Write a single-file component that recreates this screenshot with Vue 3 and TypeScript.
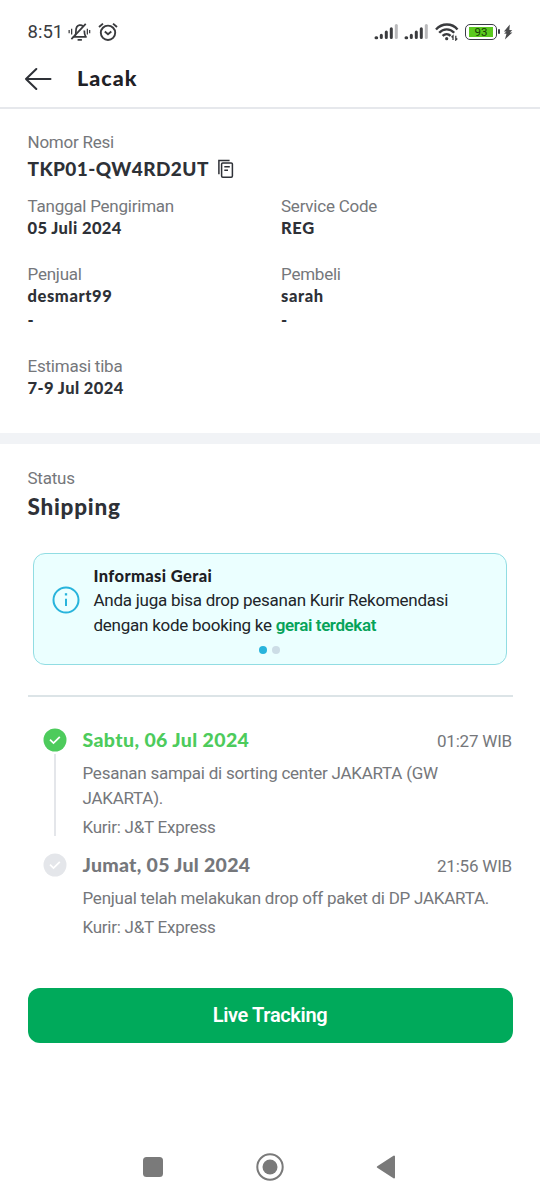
<script setup lang="ts">
interface Party { label: string; name: string; address: string }
interface TrackingEvent {
  date: string
  time: string
  message: string
  courier: string
  active: boolean
}

const parties: Party[] = [
  { label: 'Penjual', name: 'desmart99', address: '-' },
  { label: 'Pembeli', name: 'sarah', address: '-' },
]

const events: TrackingEvent[] = [
  {
    date: 'Sabtu, 06 Jul 2024',
    time: '01:27 WIB',
    message: 'Pesanan sampai di sorting center JAKARTA (GW JAKARTA).',
    courier: 'Kurir: J&T Express',
    active: true,
  },
  {
    date: 'Jumat, 05 Jul 2024',
    time: '21:56 WIB',
    message: 'Penjual telah melakukan drop off paket di DP JAKARTA.',
    courier: 'Kurir: J&T Express',
    active: false,
  },
]
</script>

<template>
  <div class="screen">
    <div class="statusbar">
      <span class="clock">8:51</span>
      <svg class="bell" width="23" height="20" viewBox="0 0 24 20" fill="none" stroke="#3a3b3e" stroke-width="1.8">
        <path d="M5 15.200h14.500M7.300 14.500c1-1.500 1-3 1-5.500C8.300 5.500 9.800 3.300 12 2.900c1.500-.2 2.800.2 3.700 1.200M17 8.500c0 3 .2 4.500 1.500 6.500" />
        <path d="M10 18.200h4.500" stroke-width="1.800" />
        <path d="M3.500 17.500 18.500 1.500" />
        <path d="M3.800 6.500v6M1.200 7.800v3.500M20.200 6.500v6M22.600 7.800v3.500" stroke-width="1.300" />
      </svg>
      <svg class="alarm" width="20" height="20" viewBox="0 0 20 20" fill="none" stroke="#3a3b3e" stroke-width="1.900">
        <circle cx="10" cy="10.800" r="7.200" />
        <path d="M6.800 9.600 10 12.300l3.300-2.700M1 5 5 1.600M19 5l-4-3.400" />
      </svg>
      <span class="spacer"></span>
      <svg v-for="n in 2" :key="n" class="signal" width="25" height="17" viewBox="0 0 25 17" stroke-width="3" stroke-linecap="round" stroke="#3a3b3e">
        <path d="M2 14.700h.7M7.300 14.500v-2.300M12.300 14.500V9M17.300 14.500V5.700" />
        <path d="M22.300 14.500V2.500" stroke="#b9b9bb" />
      </svg>
      <svg class="wifi" width="24" height="18" viewBox="0 0 24 18" fill="none" stroke="#3a3b3e" stroke-width="2.400">
        <path d="M1 6.500C7-.1 17-.1 22.500 6.500M4.200 9.800c4.200-4.600 10.800-4.600 15 0M7.600 12.900c2.400-2.400 5.600-2.400 8 0" />
        <circle cx="11.700" cy="15.700" r="1.600" fill="#3a3b3e" stroke="none" />
        <path d="M18 17v-4.300l-1.500 1.500M20.800 12.700V17l1.500-1.500" stroke-width="1.300" />
      </svg>
      <div class="battery"><span class="charge">93</span></div>
      <svg class="bolt" width="10" height="16" viewBox="0 0 10 16" fill="#4a4b4d">
        <path d="M6.800.5.900 7.600h2.600L1 9.600l2.500.2-1.600 5.700L9.400 8.400H6.800l2.500-2.200-2.900-.2z" />
      </svg>
    </div>

    <header class="header">
      <svg width="28" height="24" viewBox="0 0 28 24" fill="none" stroke="#2e3137" stroke-width="2" stroke-linecap="round" stroke-linejoin="round">
        <path d="M26.500 13H2M12.300 3 2 13l10.300 10" />
      </svg>
      <h1>Lacak</h1>
    </header>

    <section class="details">
      <div class="label">Nomor Resi</div>
      <div class="receipt">
        <strong>TKP01-QW4RD2UT</strong>
        <svg width="18" height="20" viewBox="0 0 18 20" fill="none" stroke="#2e3137" stroke-width="1.500">
          <rect x="4.600" y="3.900" width="10.800" height="14.400" rx="1.200" />
          <path d="M1.900 15.300V1.400h10.700M7.300 7.700h5.500M7.300 11.200h3.700" />
        </svg>
      </div>
      <div class="grid">
        <div>
          <div class="label">Tanggal Pengiriman</div>
          <div class="value v-date">05 Juli 2024</div>
        </div>
        <div>
          <div class="label">Service Code</div>
          <div class="value">REG</div>
        </div>
      </div>
      <div class="grid parties">
        <div v-for="party in parties" :key="party.label">
          <div class="label">{{ party.label }}</div>
          <div class="value">{{ party.name }}</div>
          <div class="value address">{{ party.address }}</div>
        </div>
      </div>
      <div class="eta">
        <div class="label">Estimasi tiba</div>
        <div class="value v-date">7-9 Jul 2024</div>
      </div>
    </section>

    <section class="status">
      <div class="label">Status</div>
      <h2>Shipping</h2>

      <div class="notice">
        <svg class="info" width="28" height="28" viewBox="0 0 28 28" fill="none" stroke="#28b4dc" stroke-width="2">
          <circle cx="14" cy="14" r="12.500" />
          <path d="M14 12.700V20" />
          <path d="M14 7.200v2.300" stroke-width="2.300" />
        </svg>
        <div class="notice-body">
          <div class="notice-title">Informasi Gerai</div>
          <p>Anda juga bisa drop pesanan Kurir Rekomendasi</p>
          <p><span>dengan kode booking ke </span><b>gerai terdekat</b></p>
        </div>
        <div class="dots"><i class="on"></i><i></i></div>
      </div>

      <ol class="timeline">
        <li v-for="event in events" :key="event.date" :class="{ active: event.active }">
          <div class="rail">
            <svg width="24" height="24" viewBox="0 0 24 24">
              <circle class="disc" cx="12" cy="12" r="11.500" />
              <path d="m7 11.700 3.500 3.400 6.300-6.200" fill="none" stroke="#fff" stroke-width="1.800" />
            </svg>
            <span v-if="event.active" class="line"></span>
          </div>
          <div class="event">
            <div class="event-head">
              <span class="date">{{ event.date }}</span>
              <time>{{ event.time }}</time>
            </div>
            <p class="message">{{ event.message }}</p>
            <div class="courier">{{ event.courier }}</div>
          </div>
        </li>
      </ol>

      <button type="button" class="live">Live Tracking</button>
    </section>

    <nav class="navbar">
      <svg width="20" height="20" viewBox="0 0 20 20"><rect width="20" height="20" rx="3.500" fill="#7a7a7a" /></svg>
      <svg width="28" height="28" viewBox="0 0 28 28">
        <circle cx="14" cy="14" r="12.700" fill="none" stroke="#7a7a7a" stroke-width="2" />
        <circle cx="14" cy="14" r="7.500" fill="#7a7a7a" />
      </svg>
      <svg width="20" height="24" viewBox="0 0 20 24">
        <path d="M1.800 12 18 1.600v20.800z" fill="#7a7a7a" stroke="#7a7a7a" stroke-width="2" stroke-linejoin="round" />
      </svg>
    </nav>
  </div>
</template>

<style>
body {
  margin: 0;
  background: #fff;
}
</style>

<style scoped>
.screen {
  box-sizing: border-box;
  width: 540px;
  height: 1200px;
  display: flex;
  flex-direction: column;
  overflow: hidden;
  background: #fff;
  color: #2e3137;
  font-family: Roboto, sans-serif;
}
svg { display: block; flex: none; }
h1, h2, p, ol { margin: 0; padding: 0; }

.statusbar {
  box-sizing: border-box;
  height: 49px;
  padding: 14px 27px 0 27.500px;
  display: flex;
  align-items: center;
}
.clock { font-size: 18.500px; color: #3a3b3e; }
.bell { margin-left: 5px; }
.alarm { margin-left: 7px; }
.spacer { flex: 1; }
.signal { margin-right: 5px; }
.wifi { margin-left: 1px; }
.battery {
  box-sizing: border-box;
  position: relative;
  width: 32px;
  height: 16px;
  margin-left: 6px;
  padding: 2px 3px;
  border: 1.500px solid #3a3b46;
  border-radius: 5px;
}
.battery::after {
  content: '';
  position: absolute;
  right: -4px;
  top: 4px;
  width: 2px;
  height: 5px;
  border-radius: 1px;
  background: #3a3b46;
}
.charge {
  display: block;
  height: 10px;
  background: #5bc91f;
  color: #173b08;
  font-size: 11.500px;
  line-height: 11px;
  text-align: center;
}
.bolt { margin-left: 6px; }

.header {
  box-sizing: border-box;
  height: 60px;
  padding-left: 24px;
  display: flex;
  align-items: center;
  border-bottom: 2px solid #e6e8ec;
}
h1 {
  margin-left: 25px;
  font: 900 21.500px/28px Lato, sans-serif;
  letter-spacing: 1px;
  color: #1f2126;
}

.details {
  box-sizing: border-box;
  height: 335px;
  padding: 22px 27.500px 0;
  border-bottom: 11px solid #f1f3f6;
}
.label { font-size: 17px; line-height: 22px; letter-spacing: -0.230px; color: #75777b; }
.value { font: 900 16.500px/23px Lato, sans-serif; letter-spacing: 0.600px; }
.v-date { letter-spacing: 0.400px; }
.receipt {
  display: flex;
  align-items: center;
  height: 32px;
  margin-bottom: 10px;
}
.receipt strong { font: 900 19px/32px Lato, sans-serif; letter-spacing: 0.420px; }
.receipt svg { margin-left: 8px; }
.grid { display: grid; grid-template-columns: 253.500px 1fr; }
.parties { margin-top: 23px; }
.address { line-height: 25px; }
.eta { margin-top: 22px; }

.status { padding: 23px 27.500px 0; }
h2 { font: 900 22.500px/36px Lato, sans-serif; letter-spacing: 0.750px; }
.notice {
  box-sizing: border-box;
  display: grid;
  grid-template-columns: 42px 1fr;
  grid-template-rows: 73px 8px;
  row-gap: 8px;
  height: 112px;
  margin: 28px 5.500px 0;
  padding: 11px 18px 0;
  border: 1.500px solid #91dde3;
  border-radius: 12px;
  background: #ebffff;
  color: #212529;
}
.info { margin-top: 21px; }
.notice-body { margin-left: -0.500px; }
.notice-title { font: 900 16.500px/23px Lato, sans-serif; letter-spacing: 0.380px; color: #1d2024; }
.notice p { font-size: 17px; letter-spacing: -0.250px; line-height: 25px; white-space: pre; }
.notice b { font-weight: 600; letter-spacing: -0.400px; color: #06a35a; }
.dots {
  grid-column: 1 / -1;
  display: flex;
  justify-content: center;
  gap: 5px;
  padding-right: 1px;
}
.dots i { width: 8px; height: 8px; border-radius: 50%; background: #ccdde6; }
.dots .on { background: #28b4dc; }

.timeline {
  margin-top: 30px;
  padding-top: 30px;
  border-top: 2px solid #dce4e7;
  list-style: none;
}
li { display: flex; height: 125px; color: #75777b; }
li:last-child { height: 136px; }
.rail {
  width: 54px;
  flex: none;
  padding-top: 1px;
  display: flex;
  flex-direction: column;
  align-items: center;
}
.disc { fill: #e4e6ea; }
.active .disc { fill: #4dcb5c; }
.line { width: 2px; height: 82px; margin-top: 2px; background: #e4e6ea; }
.event { flex: 1; padding-left: 1px; }
.event-head { display: flex; justify-content: space-between; height: 26px; }
.date { font: 900 19.500px/26px Lato, sans-serif; letter-spacing: 0.280px; }
.active .date { color: #4dcb5c; letter-spacing: 0.380px; }
time { font-size: 17px; letter-spacing: -0.200px; line-height: 29px; margin-right: 0.500px; }
.message { margin-top: 7px; padding-top: 1px; font-size: 17px; letter-spacing: -0.250px; line-height: 25px; }
.courier { margin-top: 4px; font-size: 17px; letter-spacing: -0.250px; line-height: 25px; }
.live {
  display: block;
  width: 485px;
  height: 55px;
  border: 0;
  border-radius: 12px;
  background: #00aa5b;
  color: #fff;
  font: 600 20px/55px Roboto, sans-serif;
  letter-spacing: -0.350px;
  padding: 0;
}

.navbar {
  display: flex;
  align-items: center;
  height: 28px;
  margin: auto 144px 19px 143px;
  justify-content: space-between;
}
</style>
